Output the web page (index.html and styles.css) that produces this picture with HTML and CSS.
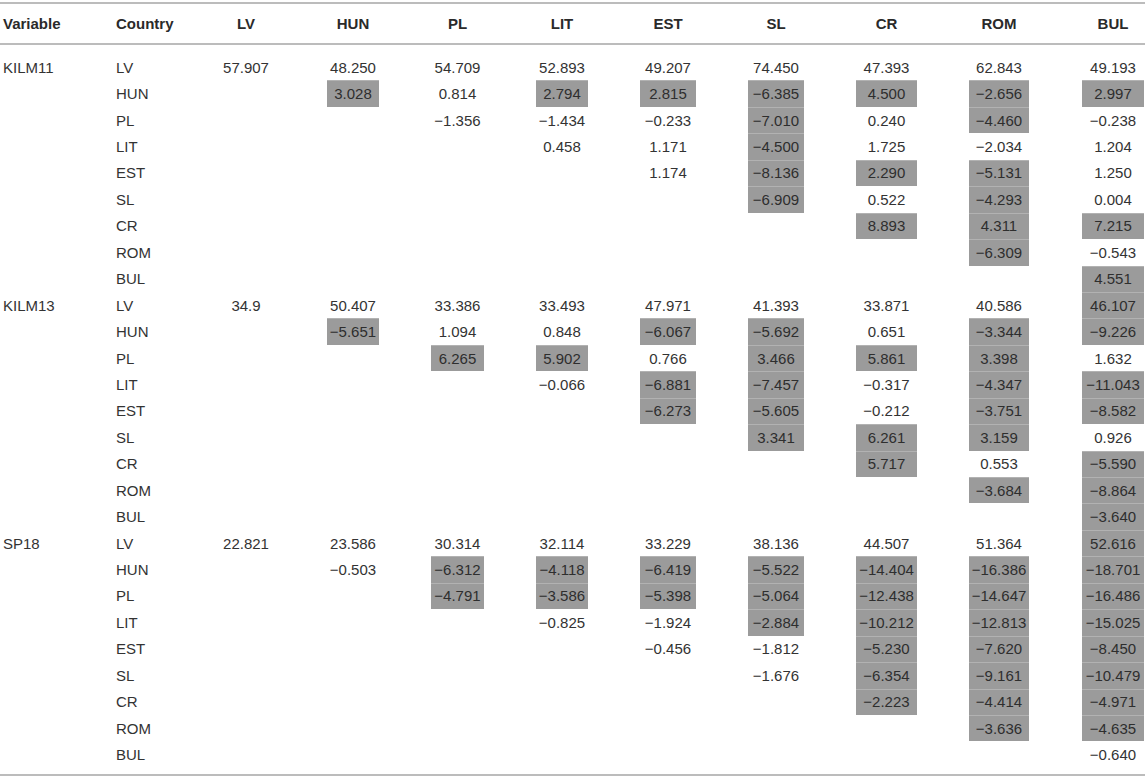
FILE: index.html
```html
<!DOCTYPE html>
<html lang="en">
<head>
    <meta charset="UTF-8">
    <title>Pairwise differences table</title>
    <link rel="stylesheet" href="styles.css">
</head>
<body>

<table class="grid">
    <colgroup>
        <col class="c-var">
        <col class="c-country">
        <col class="c-lv">
        <col class="c-hun">
        <col class="c-pl">
        <col class="c-lit">
        <col class="c-est">
        <col class="c-sl">
        <col class="c-cr">
        <col class="c-rom">
        <col class="c-bul">
    </colgroup>
    <thead>
        <tr>
            <th class="txt">Variable</th>
            <th class="txt">Country</th>
            <th>LV</th>
            <th>HUN</th>
            <th>PL</th>
            <th>LIT</th>
            <th>EST</th>
            <th>SL</th>
            <th>CR</th>
            <th>ROM</th>
            <th>BUL</th>
        </tr>
    </thead>
    <tbody>
        <!-- KILM11 -->
        <tr class="first">
            <td class="txt">KILM11</td><td class="txt">LV</td>
            <td>57.907</td><td>48.250</td><td>54.709</td><td>52.893</td><td>49.207</td><td>74.450</td><td>47.393</td><td>62.843</td><td>49.193</td>
        </tr>
        <tr>
            <td class="txt"></td><td class="txt">HUN</td>
            <td></td><td class="hl">3.028</td><td>0.814</td><td class="hl">2.794</td><td class="hl">2.815</td><td class="hl">−6.385</td><td class="hl">4.500</td><td class="hl">−2.656</td><td class="hl">2.997</td>
        </tr>
        <tr>
            <td class="txt"></td><td class="txt">PL</td>
            <td></td><td></td><td>−1.356</td><td>−1.434</td><td>−0.233</td><td class="hl">−7.010</td><td>0.240</td><td class="hl">−4.460</td><td>−0.238</td>
        </tr>
        <tr>
            <td class="txt"></td><td class="txt">LIT</td>
            <td></td><td></td><td></td><td>0.458</td><td>1.171</td><td class="hl">−4.500</td><td>1.725</td><td>−2.034</td><td>1.204</td>
        </tr>
        <tr>
            <td class="txt"></td><td class="txt">EST</td>
            <td></td><td></td><td></td><td></td><td>1.174</td><td class="hl">−8.136</td><td class="hl">2.290</td><td class="hl">−5.131</td><td>1.250</td>
        </tr>
        <tr>
            <td class="txt"></td><td class="txt">SL</td>
            <td></td><td></td><td></td><td></td><td></td><td class="hl">−6.909</td><td>0.522</td><td class="hl">−4.293</td><td>0.004</td>
        </tr>
        <tr>
            <td class="txt"></td><td class="txt">CR</td>
            <td></td><td></td><td></td><td></td><td></td><td></td><td class="hl">8.893</td><td class="hl">4.311</td><td class="hl">7.215</td>
        </tr>
        <tr>
            <td class="txt"></td><td class="txt">ROM</td>
            <td></td><td></td><td></td><td></td><td></td><td></td><td></td><td class="hl">−6.309</td><td>−0.543</td>
        </tr>
        <tr>
            <td class="txt"></td><td class="txt">BUL</td>
            <td></td><td></td><td></td><td></td><td></td><td></td><td></td><td></td><td class="hl">4.551</td>
        </tr>

        <!-- KILM13 -->
        <tr>
            <td class="txt">KILM13</td><td class="txt">LV</td>
            <td>34.9</td><td>50.407</td><td>33.386</td><td>33.493</td><td>47.971</td><td>41.393</td><td>33.871</td><td>40.586</td><td class="hl">46.107</td>
        </tr>
        <tr>
            <td class="txt"></td><td class="txt">HUN</td>
            <td></td><td class="hl">−5.651</td><td>1.094</td><td>0.848</td><td class="hl">−6.067</td><td class="hl">−5.692</td><td>0.651</td><td class="hl">−3.344</td><td class="hl">−9.226</td>
        </tr>
        <tr>
            <td class="txt"></td><td class="txt">PL</td>
            <td></td><td></td><td class="hl">6.265</td><td class="hl">5.902</td><td>0.766</td><td class="hl">3.466</td><td class="hl">5.861</td><td class="hl">3.398</td><td>1.632</td>
        </tr>
        <tr>
            <td class="txt"></td><td class="txt">LIT</td>
            <td></td><td></td><td></td><td>−0.066</td><td class="hl">−6.881</td><td class="hl">−7.457</td><td>−0.317</td><td class="hl">−4.347</td><td class="hl">−11.043</td>
        </tr>
        <tr>
            <td class="txt"></td><td class="txt">EST</td>
            <td></td><td></td><td></td><td></td><td class="hl">−6.273</td><td class="hl">−5.605</td><td>−0.212</td><td class="hl">−3.751</td><td class="hl">−8.582</td>
        </tr>
        <tr>
            <td class="txt"></td><td class="txt">SL</td>
            <td></td><td></td><td></td><td></td><td></td><td class="hl">3.341</td><td class="hl">6.261</td><td class="hl">3.159</td><td>0.926</td>
        </tr>
        <tr>
            <td class="txt"></td><td class="txt">CR</td>
            <td></td><td></td><td></td><td></td><td></td><td></td><td class="hl">5.717</td><td>0.553</td><td class="hl">−5.590</td>
        </tr>
        <tr>
            <td class="txt"></td><td class="txt">ROM</td>
            <td></td><td></td><td></td><td></td><td></td><td></td><td></td><td class="hl">−3.684</td><td class="hl">−8.864</td>
        </tr>
        <tr>
            <td class="txt"></td><td class="txt">BUL</td>
            <td></td><td></td><td></td><td></td><td></td><td></td><td></td><td></td><td class="hl">−3.640</td>
        </tr>

        <!-- SP18 -->
        <tr>
            <td class="txt">SP18</td><td class="txt">LV</td>
            <td>22.821</td><td>23.586</td><td>30.314</td><td>32.114</td><td>33.229</td><td>38.136</td><td>44.507</td><td>51.364</td><td class="hl">52.616</td>
        </tr>
        <tr>
            <td class="txt"></td><td class="txt">HUN</td>
            <td></td><td>−0.503</td><td class="hl">−6.312</td><td class="hl">−4.118</td><td class="hl">−6.419</td><td class="hl">−5.522</td><td class="hl">−14.404</td><td class="hl">−16.386</td><td class="hl">−18.701</td>
        </tr>
        <tr>
            <td class="txt"></td><td class="txt">PL</td>
            <td></td><td></td><td class="hl">−4.791</td><td class="hl">−3.586</td><td class="hl">−5.398</td><td class="hl">−5.064</td><td class="hl">−12.438</td><td class="hl">−14.647</td><td class="hl">−16.486</td>
        </tr>
        <tr>
            <td class="txt"></td><td class="txt">LIT</td>
            <td></td><td></td><td></td><td>−0.825</td><td>−1.924</td><td class="hl">−2.884</td><td class="hl">−10.212</td><td class="hl">−12.813</td><td class="hl">−15.025</td>
        </tr>
        <tr>
            <td class="txt"></td><td class="txt">EST</td>
            <td></td><td></td><td></td><td></td><td>−0.456</td><td>−1.812</td><td class="hl">−5.230</td><td class="hl">−7.620</td><td class="hl">−8.450</td>
        </tr>
        <tr>
            <td class="txt"></td><td class="txt">SL</td>
            <td></td><td></td><td></td><td></td><td></td><td>−1.676</td><td class="hl">−6.354</td><td class="hl">−9.161</td><td class="hl">−10.479</td>
        </tr>
        <tr>
            <td class="txt"></td><td class="txt">CR</td>
            <td></td><td></td><td></td><td></td><td></td><td></td><td class="hl">−2.223</td><td class="hl">−4.414</td><td class="hl">−4.971</td>
        </tr>
        <tr>
            <td class="txt"></td><td class="txt">ROM</td>
            <td></td><td></td><td></td><td></td><td></td><td></td><td></td><td class="hl">−3.636</td><td class="hl">−4.635</td>
        </tr>
        <tr class="last">
            <td class="txt"></td><td class="txt">BUL</td>
            <td></td><td></td><td></td><td></td><td></td><td></td><td></td><td></td><td>−0.640</td>
        </tr>
    </tbody>
</table>

</body>
</html>
```

FILE: styles.css
```css
body {
    margin: 0;
    padding: 0;
    background-color: #ffffff;
    font-family: "Liberation Sans", Arial, sans-serif;
    color: #333333;
}

.grid {
    width: 1145px;
    margin-top: 2px;
    table-layout: fixed;
    border-collapse: separate;
    border-spacing: 0;
    font-size: 15px;
}

.c-var { width: 113px; }
.c-country { width: 78px; }
.c-lv { width: 110px; }
.c-hun { width: 104px; }
.c-pl { width: 105px; }
.c-lit { width: 104px; }
.c-est { width: 108px; }
.c-sl { width: 108px; }
.c-cr { width: 113px; }
.c-rom { width: 112px; }
.c-bul { width: 90px; }

.grid th,
.grid td {
    padding: 0 26px;
    text-align: center;
    vertical-align: middle;
    white-space: nowrap;
}
.grid th:last-child,
.grid td:last-child {
    padding: 0 1px 0 27px;
}
.grid .txt {
    padding-left: 3px;
    padding-right: 0;
    text-align: left;
}

.grid th {
    font-weight: bold;
    color: #2a2a2a;
    line-height: 19px;
    padding-top: 10px;
    padding-bottom: 10px;
    border-top: 2px solid #bcbcbc;
    border-bottom: 2px solid #bcbcbc;
}

.grid td {
    line-height: 17px;
}
.grid tbody tr {
    height: 26.44px;
}
.grid tbody tr.first {
    height: 35.44px;
}
.grid tr.first td {
    padding-top: 9px;
}
.grid tbody tr.last {
    height: 34.44px;
}
.grid tr.last td {
    padding-bottom: 6px;
    border-bottom: 2px solid #bcbcbc;
}

/* shaded (significant) cells: fill only the content box */
.grid td.hl {
    background: linear-gradient(#b2b2b2, #b2b2b2) top / 100% 1px no-repeat content-box,
                #9b9b9b content-box;
    color: #2e2e2e;
}
```
